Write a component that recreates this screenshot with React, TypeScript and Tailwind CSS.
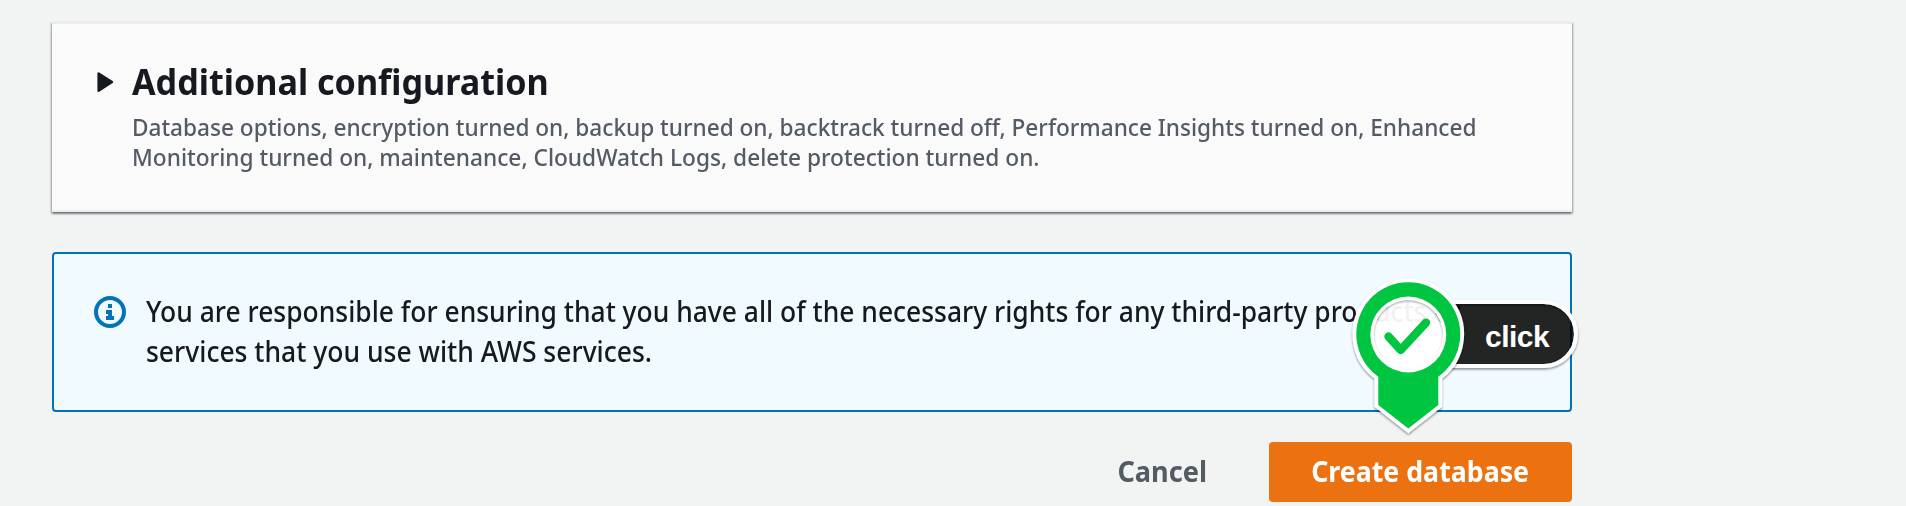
function Caret() {
  return (
    <svg className="mt-[11px] h-[23px] w-[18px] shrink-0" viewBox="0 0 18 23" aria-hidden="true">
      <path d="M1.6 2.5 L1.6 19.7 L15 11.1 Z" fill="#16191f" stroke="#16191f" strokeWidth="2.4" strokeLinejoin="round" />
    </svg>
  );
}

function InfoIcon() {
  return (
    <svg className="mt-[5px] h-8 w-8 shrink-0" viewBox="0 0 16 16" fill="none" aria-hidden="true">
      <circle cx="8" cy="8" r="7" stroke="#0073bb" strokeWidth="2" />
      <path d="M7 4h2v2H7zM6 7h3v3h1v2H6v-2h1V9H6z" fill="#0073bb" />
    </svg>
  );
}

function ConfigurationPanel() {
  return (
    <section className="flex h-[190px] w-[1520px] gap-[17px] border-y-2 border-[#eaeded] bg-[#fafafa] pt-[36px] pl-[45px] shadow-[0_2px_2px_0_rgba(0,28,36,0.38),1px_1px_2px_0_rgba(0,28,36,0.25),-1px_1px_2px_0_rgba(0,28,36,0.25)]">
      <Caret />
      <div className="flex flex-col gap-[8px] whitespace-nowrap">
        <h2 className="origin-left scale-x-[0.948] text-[36px] leading-[44px] font-bold text-[#16191f]">
          Additional configuration
        </h2>
        <p className="text-[24px] leading-[30px] font-medium text-[#545b64]">
          <span className="block origin-left scale-x-[0.942]">
            Database options, encryption turned on, backup turned on, backtrack turned off, Performance Insights turned on, Enhanced
          </span>
          <span className="block origin-left scale-x-[0.945]">
            Monitoring turned on, maintenance, CloudWatch Logs, delete protection turned on.
          </span>
        </p>
      </div>
    </section>
  );
}

function RightsNotice() {
  return (
    <section className="flex h-[160px] w-[1520px] gap-[20px] rounded-[4px] border-2 border-[#0073bb] bg-[#f1faff] pt-[37px] pl-[40px]">
      <InfoIcon />
      <p className="text-[28px] leading-[40px] font-medium whitespace-nowrap text-[#16191f]">
        <span className="block origin-left scale-x-[0.944]">
          You are responsible for ensuring that you have all of the necessary rights for any third-party products or
        </span>
        <span className="block origin-left scale-x-[0.946]">services that you use with AWS services.</span>
      </p>
    </section>
  );
}

function ClickMarker() {
  return (
    <div className="pointer-events-none absolute top-[270px] left-[1340px] h-[180px] w-[250px]">
      <svg className="absolute inset-0 h-full w-full" viewBox="1340 270 250 180" fill="none" aria-hidden="true">
        <defs>
          <filter id="drop" x="-20%" y="-20%" width="140%" height="150%">
            <feDropShadow dx="0" dy="1.5" stdDeviation="1" floodColor="#000" floodOpacity="0.45" />
          </filter>
          <filter id="soft">
            <feGaussianBlur stdDeviation="0.9" />
          </filter>
          <clipPath id="disc">
            <circle cx="1408.3" cy="334.5" r="34.5" />
          </clipPath>
          <mask id="hole" maskUnits="userSpaceOnUse" x="1340" y="270" width="250" height="180">
            <rect x="1340" y="270" width="250" height="180" fill="#fff" />
            <circle cx="1408.3" cy="334.5" r="34.5" fill="#000" />
          </mask>
        </defs>
        <path d="M1450 304H1544A30 30 0 0 1 1544 364H1450Z" fill="#010101" fillOpacity="0.86" />
        <path d="M1450 302H1544A32 32 0 0 1 1544 366H1450" stroke="#fff" strokeWidth="4" filter="url(#drop)" />
        <g mask="url(#hole)">
          <path
            d="M1378.3 376.7A52 52 0 1 1 1438.3 376.7V405L1408.3 428.5L1378.3 405Z"
            fill="#00c540"
            stroke="#fff"
            strokeWidth="7.6"
            filter="url(#drop)"
          />
          <path d="M1378.3 376.7A52 52 0 1 1 1438.3 376.7V405L1408.3 428.5L1378.3 405Z" fill="#00c540" />
          <circle cx="1408.3" cy="334.5" r="38" fill="#fff" />
        </g>
        <circle cx="1408.3" cy="334.5" r="34.5" fill="#fff" fillOpacity="0.94" />
        <g clipPath="url(#disc)">
          <circle cx="1408.3" cy="336" r="35.7" stroke="#000" strokeOpacity="0.4" strokeWidth="2" filter="url(#soft)" />
        </g>
        <path d="M1388.5 336.5L1400.7 350L1426 322.7" stroke="#00c540" strokeWidth="8.4" strokeLinecap="round" strokeLinejoin="round" />
      </svg>
      <span className="absolute top-[50px] left-[145px] font-['Liberation_Sans',sans-serif] text-[30px] leading-[34px] font-bold tracking-[-0.5px] text-white">
        click
      </span>
    </div>
  );
}

export default function App() {
  return (
    <main className="relative isolate flex h-[506px] w-[1906px] flex-col overflow-hidden bg-[#f2f3f3] pt-[22px] pl-[52px] font-['Noto_Sans','Open_Sans',sans-serif]">
      <ConfigurationPanel />
      <div className="mt-[40px]">
        <RightsNotice />
      </div>
      <div className="mt-[30px] flex h-[60px] w-[1520px] justify-end gap-[32px] text-[28px] leading-[40px] font-bold whitespace-nowrap">
        <button className="w-[150px] pb-[2px] text-[#545b64]">
          <span className="inline-block scale-x-[0.97]">Cancel</span>
        </button>
        <button className="w-[303px] rounded-[4px] bg-[#ec7211] pb-[2px] text-white">
          <span className="inline-block scale-x-[0.955]">Create database</span>
        </button>
      </div>
      <ClickMarker />
    </main>
  );
}
